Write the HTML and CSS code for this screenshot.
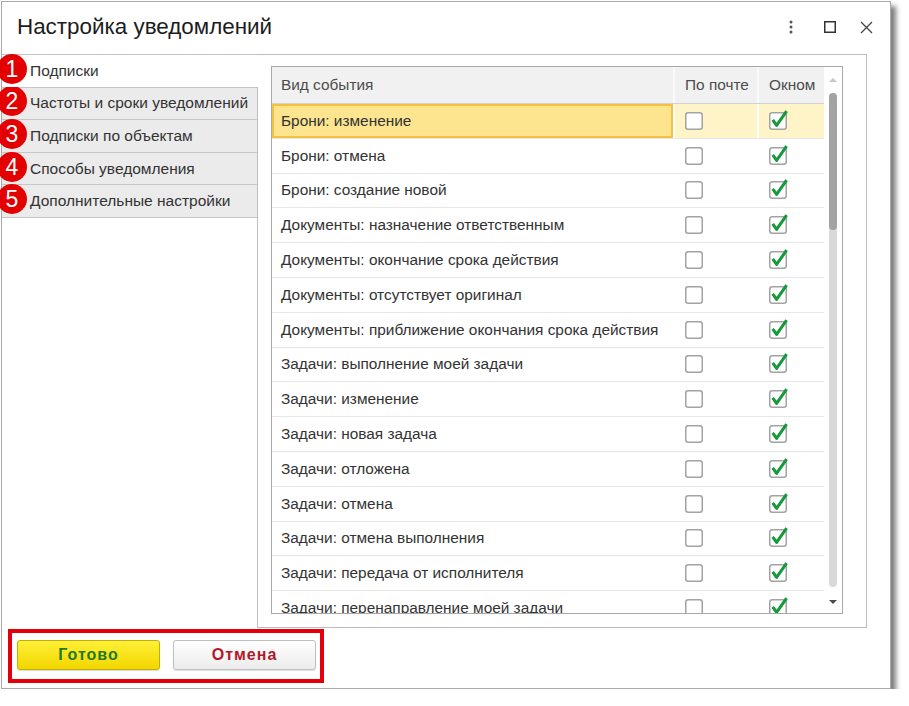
FILE: index.html
```html
<!DOCTYPE html>
<html lang="ru">
<head>
    <meta charset="UTF-8">
    <meta name="viewport" content="width=device-width, initial-scale=1.0">
    <link rel="stylesheet" href="styles.css">
</head>
<body>
    <div class="window">
        <div class="window-head">
            <h1 class="window-title">Настройка уведомлений</h1>
            <div class="window-tools">
                <svg class="tool-more" width="4" height="14" viewBox="0 0 4 14">
                    <circle cx="2" cy="2" r="1.5" fill="#555"/>
                    <circle cx="2" cy="7" r="1.5" fill="#555"/>
                    <circle cx="2" cy="12" r="1.5" fill="#555"/>
                </svg>
                <svg class="tool-max" width="12" height="12" viewBox="0 0 12 12">
                    <rect x="0.75" y="0.75" width="10.5" height="10.5" fill="none" stroke="#333" stroke-width="1.5"/>
                </svg>
                <svg class="tool-close" width="13" height="13" viewBox="0 0 13 13">
                    <path d="M1 1L12 12M12 1L1 12" stroke="#444" stroke-width="1.3"/>
                </svg>
            </div>
        </div>

        <div class="window-body">
            <div class="tabs">
                <div class="tab tab-active"><span class="mark">1</span>Подписки</div>
                <div class="tab"><span class="mark">2</span>Частоты и сроки уведомлений</div>
                <div class="tab"><span class="mark">3</span>Подписки по объектам</div>
                <div class="tab"><span class="mark">4</span>Способы уведомления</div>
                <div class="tab tab-last"><span class="mark">5</span>Дополнительные настройки</div>
            </div>

            <div class="page">
                <div class="grid">
                    <div class="grid-main">
                        <div class="grid-head">
                            <div class="cell">Вид события</div>
                            <div class="cell cell-box">По почте</div>
                            <div class="cell cell-box">Окном</div>
                        </div>
                        <div id="rows"></div>
                    </div>
                    <div class="scrollbar">
                        <div class="scroll-up"></div>
                        <div class="scroll-track"><div class="scroll-thumb"></div></div>
                        <div class="scroll-down"></div>
                    </div>
                </div>
            </div>
        </div>

        <div class="window-foot">
            <div class="note-frame">
                <button class="btn btn-ok">Готово</button>
                <button class="btn btn-cancel">Отмена</button>
            </div>
        </div>
    </div>

    <script>
        const events = [
            'Брони: изменение',
            'Брони: отмена',
            'Брони: создание новой',
            'Документы: назначение ответственным',
            'Документы: окончание срока действия',
            'Документы: отсутствует оригинал',
            'Документы: приближение окончания срока действия',
            'Задачи: выполнение моей задачи',
            'Задачи: изменение',
            'Задачи: новая задача',
            'Задачи: отложена',
            'Задачи: отмена',
            'Задачи: отмена выполнения',
            'Задачи: передача от исполнителя',
            'Задачи: перенаправление моей задачи'
        ]

        function checkbox(checked) {
            const tick = checked ? '<path d="M3.7 7.8L7.6 13.4L17.6 -0.8" fill="none" stroke="#14993b" stroke-width="3" stroke-linejoin="round"/>' : ''
            return `<svg class="check" width="18" height="18" viewBox="0 0 18 18">
                <rect x="0.75" y="0.75" width="16.5" height="16.5" rx="2.5" fill="#fff" stroke="#a3a3a3" stroke-width="1.5"/>
                ${tick}</svg>`
        }

        const rows = document.querySelector('#rows')
        rows.innerHTML = events.map((name, i) => `
            <div class="grid-row${i === 0 ? ' row-current' : ''}">
                <div class="cell">${name}</div>
                <div class="cell cell-box">${checkbox(false)}</div>
                <div class="cell cell-box">${checkbox(true)}</div>
            </div>`).join('')
    </script>
</body>
</html>
```

FILE: styles.css
```css
* {
    box-sizing: border-box;
}

body {
    margin: 0;
    background-color: #fff;
    font-family: 'Liberation Sans', Arial, sans-serif;
    color: #333;
}

.window {
    display: flex;
    flex-direction: column;
    width: 890px;
    height: 688px;
    margin: 1px 0 0 1px;
    border: 1px solid #a9a9a9;
    background-color: #fff;
    box-shadow: 5px 5px 5px rgba(0, 0, 0, 0.5);
}

/* header */

.window-head {
    display: flex;
    align-items: center;
    height: 52px;
    padding: 0 0 2px 15px;
}

.window-title {
    margin: 0;
    font-size: 22.4px;
    font-weight: normal;
    color: #1c1c1c;
}

.window-tools {
    display: flex;
    align-items: center;
    margin-left: auto;
    margin-right: 17px;
}

.tool-max {
    margin-left: 31px;
}

.tool-close {
    margin-left: 24px;
}

/* tabs + page */

.window-body {
    display: flex;
    height: 574px;
    padding-right: 23px;
}

.tabs {
    width: 255px;
    flex: none;
}

.tab {
    position: relative;
    display: flex;
    align-items: center;
    height: 32.6px;
    padding-left: 28px;
    border-top: 1px solid #c6c6c6;
    background-color: #ebebeb;
    font-size: 15.5px;
    color: #333;
    white-space: nowrap;
}

.tab-active {
    z-index: 1;
    width: 256px;
    background-color: #fff;
}

.tab-last {
    height: 33.6px;
    border-bottom: 1px solid #c6c6c6;
}

.mark {
    position: absolute;
    left: -5px;
    top: calc(50% - 17px);
    width: 30px;
    height: 30px;
    border-radius: 50%;
    background-color: #e30000;
    color: #fff;
    font-size: 23px;
    line-height: 30px;
    text-align: center;
}

.page {
    width: 610px;
    padding: 11px 23px 13px 13px;
    border: 1px solid #bdbdbd;
}

/* event grid */

.grid {
    display: flex;
    height: 548px;
    border: 1px solid #a8a8a8;
    overflow: hidden;
}

.grid-main {
    flex: 1;
    overflow: hidden;
}

.grid-head,
.grid-row {
    display: grid;
    grid-template-columns: 401px 84px 67px;
}

.grid-head {
    height: 37px;
    background-color: #f1f1f1;
    border-bottom: 1px solid #d2d2d2;
    color: #4d4d4d;
}

.grid-row {
    height: 34.8px;
    border-bottom: 1px solid #e6e6e6;
}

.cell {
    display: flex;
    align-items: center;
    padding-left: 9px;
    font-size: 15.4px;
    white-space: nowrap;
}

.cell-box {
    padding-left: 10px;
    border-left: 2px solid #fafafa;
}

.grid-row .cell-box {
    border-left-color: #fff;
}

.row-current .cell {
    background-color: #fff3c8;
}

.row-current .cell:first-child {
    background-color: #fde48f;
    box-shadow: inset 0 0 0 2px #f6c23c;
}

.check {
    overflow: visible;
}

/* scrollbar */

.scrollbar {
    display: flex;
    flex-direction: column;
    align-items: center;
    width: 18px;
    flex: none;
}

.scroll-up {
    width: 0;
    height: 0;
    margin: 11px 0 11px;
    border-left: 4px solid transparent;
    border-right: 4px solid transparent;
    border-bottom: 4px solid #c6c6c6;
}

.scroll-track {
    width: 8px;
    height: 494px;
    border-radius: 4px;
    background-color: #d9d9d9;
}

.scroll-thumb {
    height: 137px;
    border-radius: 4px;
    background-color: #a3a3a3;
}

.scroll-down {
    width: 0;
    height: 0;
    margin-top: 13px;
    border-left: 4px solid transparent;
    border-right: 4px solid transparent;
    border-top: 4px solid #4a4a4a;
}

/* footer */

.window-foot {
    height: 60px;
    padding: 1px 0 0 6px;
}

.note-frame {
    display: flex;
    gap: 13px;
    width: 316px;
    height: 54px;
    padding: 7px 0 0 5px;
    border: 4px solid #e4000b;
}

.btn {
    width: 143px;
    height: 30px;
    border-radius: 3px;
    font-family: 'Liberation Sans', Arial, sans-serif;
    font-size: 16px;
    font-weight: bold;
    letter-spacing: 1px;
    cursor: pointer;
}

.btn-ok {
    border: 1px solid #c2b000;
    background: linear-gradient(#fff038, #f3d600);
    color: #1f7a1f;
    box-shadow: 0 1px 1px rgba(0, 0, 0, 0.15);
}

.btn-cancel {
    border: 1px solid #bfbfbf;
    background: linear-gradient(#fff, #ececec);
    color: #b2182b;
    box-shadow: 0 1px 1px rgba(0, 0, 0, 0.12);
}
```
